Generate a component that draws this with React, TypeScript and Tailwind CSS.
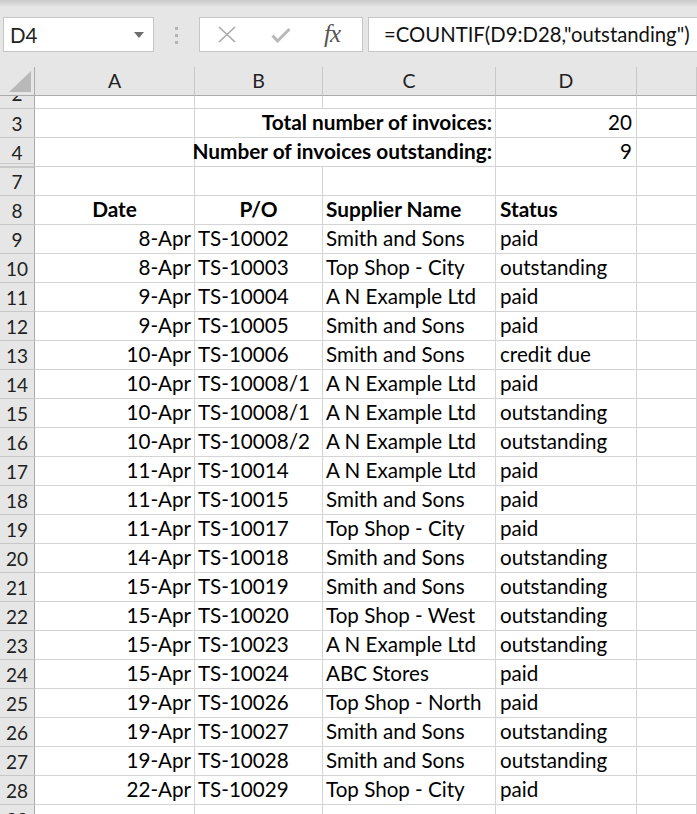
import React from 'react'

type Row = [string, string, string, string]

const rows: Row[] = [
    ['8-Apr', 'TS-10002', 'Smith and Sons', 'paid'],
    ['8-Apr', 'TS-10003', 'Top Shop - City', 'outstanding'],
    ['9-Apr', 'TS-10004', 'A N Example Ltd', 'paid'],
    ['9-Apr', 'TS-10005', 'Smith and Sons', 'paid'],
    ['10-Apr', 'TS-10006', 'Smith and Sons', 'credit due'],
    ['10-Apr', 'TS-10008/1', 'A N Example Ltd', 'paid'],
    ['10-Apr', 'TS-10008/1', 'A N Example Ltd', 'outstanding'],
    ['10-Apr', 'TS-10008/2', 'A N Example Ltd', 'outstanding'],
    ['11-Apr', 'TS-10014', 'A N Example Ltd', 'paid'],
    ['11-Apr', 'TS-10015', 'Smith and Sons', 'paid'],
    ['11-Apr', 'TS-10017', 'Top Shop - City', 'paid'],
    ['14-Apr', 'TS-10018', 'Smith and Sons', 'outstanding'],
    ['15-Apr', 'TS-10019', 'Smith and Sons', 'outstanding'],
    ['15-Apr', 'TS-10020', 'Top Shop - West', 'outstanding'],
    ['15-Apr', 'TS-10023', 'A N Example Ltd', 'outstanding'],
    ['15-Apr', 'TS-10024', 'ABC Stores', 'paid'],
    ['19-Apr', 'TS-10026', 'Top Shop - North', 'paid'],
    ['19-Apr', 'TS-10027', 'Smith and Sons', 'outstanding'],
    ['19-Apr', 'TS-10028', 'Smith and Sons', 'outstanding'],
    ['22-Apr', 'TS-10029', 'Top Shop - City', 'paid'],
]

const grid = "grid grid-cols-[35px_160px_128px_173px_141px_1fr]"
const cell = "h-[29px] border-r border-b border-[#d4d4d4] flex items-end pb-[4px] whitespace-nowrap"
const rowHead = "h-[29px] border-r border-b border-r-[#ababab] border-b-[#c8c8c8] bg-[#e6e6e6] flex items-center justify-center text-[19px] text-[#222]"

const FormulaBar = () => (
    <div className="h-[67px] bg-[linear-gradient(#c9c9c9,#e6e6e6_7px)] flex items-start pt-[17px] pl-[3px]">
        <div className="w-[151px] h-[35px] bg-white border border-[#c6c6c6] flex items-center justify-between pl-[6px] pr-[9px]">
            <span className="text-[20.5px] text-[#222] pt-[1px]">D4</span>
            <svg width="10" height="6" viewBox="0 0 10 6"><path d="M0 0h10L5 6z" fill="#6e6e6e" /></svg>
        </div>
        <div className="w-[45px] h-[35px] flex flex-col items-center justify-center gap-[4px] pt-[1px]">
            <span className="size-[3px] bg-[#b4b4b4]" />
            <span className="size-[3px] bg-[#b4b4b4]" />
            <span className="size-[3px] bg-[#b4b4b4]" />
        </div>
        <div className="w-[164px] h-[35px] bg-white border border-[#c6c6c6] flex items-center pl-[18px]">
            <svg width="18" height="17" viewBox="0 0 18 17"><path d="M1 1L17 16M17 1L1 16" stroke="#a9a9a9" strokeWidth="1.6" /></svg>
            <svg className="ml-[35px]" width="20" height="16" viewBox="0 0 20 16"><path d="M1.5 8.5L6.5 14L18.5 2" stroke="#b9b9b9" strokeWidth="3" fill="none" /></svg>
            <span className="ml-[33px] text-[25px] italic text-[#555] font-['Liberation_Serif',serif] tracking-[-1px] pb-[2px]">fx</span>
        </div>
        <div className="ml-[5px] flex-1 h-[35px] bg-white border border-r-0 border-[#c6c6c6] flex items-center pl-[15px] text-[20.3px] text-[#111]">
            =COUNTIF(D9:D28,"outstanding")
        </div>
    </div>
)

const ColumnHeaders = () => (
    <div className={grid + " h-[29px] bg-[#e6e6e6] text-[19.5px] text-[#222]"}>
        <div className="border-r border-b border-r-[#ababab] border-b-[#ababab] flex items-end justify-end pr-[3px] pb-[3px]">
            <svg width="22" height="21" viewBox="0 0 22 21"><path d="M22 0V21H0z" fill="#b9b9b9" /></svg>
        </div>
        {['A', 'B', 'C', 'D', ''].map((l, i) => (
            <div key={i} className="border-r border-b border-r-[#c8c8c8] border-b-[#ababab] flex items-center justify-center">
                {l}
            </div>
        ))}
    </div>
)

const App = () => {
    return (
        <div className="w-[697px] h-[814px] overflow-hidden bg-white font-['Lato','Carlito',sans-serif] text-[20.6px] text-black leading-none">
            <FormulaBar />
            <ColumnHeaders />

            {/* row 2, scrolled mostly out of view */}
            <div className={grid + " h-[13px] overflow-hidden"}>
                <div className="h-[13px] border-r border-b border-r-[#ababab] border-b-[#c8c8c8] bg-[#e6e6e6] overflow-hidden text-[19px] text-[#222]">
                    <div className="h-[29px] mt-[-17px] flex items-center justify-center">2</div>
                </div>
                {[0, 1, 2, 3, 4].map(i => <div key={i} className="h-[13px] border-r border-b border-[#d4d4d4]" />)}
            </div>

            <div className={grid}>
                <div className={rowHead}>3</div>
                <div className={cell} />
                <div className={cell + " col-span-2 justify-end pr-[3px] font-bold text-[20.8px]"}>Total number of invoices:</div>
                <div className={cell + " justify-end pr-[4px]"}>20</div>
                <div className={cell} />
            </div>
            <div className={grid}>
                <div className={rowHead + " shadow-[inset_0_-2px_0_#e6e6e6,inset_0_-3px_0_#c8c8c8]"}>4</div>
                <div className={cell} />
                <div className={cell + " col-span-2 justify-end pr-[3px] font-bold text-[20.8px]"}>Number of invoices outstanding:</div>
                <div className={cell + " justify-end pr-[4px]"}>9</div>
                <div className={cell} />
            </div>
            <div className={grid}>
                <div className={rowHead + " shadow-[inset_0_1px_0_#c8c8c8]"}>7</div>
                {[0, 1, 2, 3, 4].map(i => <div key={i} className={cell} />)}
            </div>
            <div className={grid + " font-bold text-[20.8px]"}>
                <div className={rowHead + " font-normal"}>8</div>
                <div className={cell + " justify-center"}>Date</div>
                <div className={cell + " justify-center"}>P/O</div>
                <div className={cell + " pl-[3px]"}>Supplier Name</div>
                <div className={cell + " pl-[4px]"}>Status</div>
                <div className={cell} />
            </div>

            {rows.map(([date, po, supplier, status], i) => (
                <div key={i} className={grid}>
                    <div className={rowHead}>{i + 9}</div>
                    <div className={cell + " justify-end pr-[3px]"}>{date}</div>
                    <div className={cell + " pl-[3px]"}>{po}</div>
                    <div className={cell + " pl-[3px]"}>{supplier}</div>
                    <div className={cell + " pl-[4px]"}>{status}</div>
                    <div className={cell} />
                </div>
            ))}

            <div className={grid}>
                <div className={rowHead}>29</div>
                {[0, 1, 2, 3, 4].map(i => <div key={i} className={cell} />)}
            </div>
        </div>
    )
}

export default App
